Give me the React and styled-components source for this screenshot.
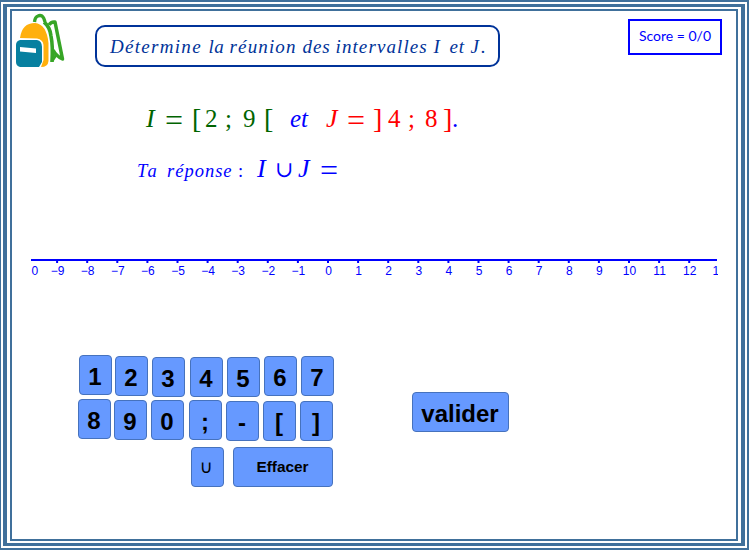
import React from "react";
import styled, { createGlobalStyle } from "styled-components";

const GlobalStyle = createGlobalStyle`
  * { box-sizing: border-box; }
  body { margin: 0; background: #fff; overflow: hidden; }
`;

const OuterFrame = styled.div`
  width: 749px;
  height: 550px;
  border: solid #40709b;
  border-width: 2px 2px 2px 1px;
  padding: 2px;
  background: #fff;
`;

const MiddleFrame = styled.div`
  height: 100%;
  border: solid #40709b;
  border-width: 3px 4px 3px 4px;
  padding: 2px 3px 2px 3px;
`;

const InnerFrame = styled.main`
  height: 100%;
  border: 2px solid #40709b;
  display: flex;
  flex-direction: column;
`;

const Header = styled.header`
  display: flex;
  align-items: flex-start;
  height: 62px;
`;

const Backpack = styled.svg`
  display: block;
  width: 50px;
  height: 58px;
  margin: 2px 0 0 3px;
  flex: none;
`;

const Title = styled.h1`
  margin: 14px 0 0 30px;
  width: 405px;
  height: 42px;
  border: 2px solid #003399;
  border-radius: 10px;
  padding: 0 0 0 13px;
  display: flex;
  align-items: baseline;
  line-height: 40px;
  font-weight: 400;
  flex: none;
`;

const Score = styled.div`
  margin: 8px 0 0 128px;
  width: 94px;
  height: 36px;
  border: 2px solid #0000ff;
  color: #0000ff;
  font: 14px/30px Lato, "Liberation Sans", sans-serif;
  text-align: center;
  white-space: pre;
  flex: none;
`;

const MathLine = styled.div`
  display: flex;
  align-items: baseline;
  height: 40px;
  line-height: 40px;
  margin: ${(p) => p.$margin};
`;

const Token = styled.span`
  flex: none;
  width: ${(p) => p.$slot}px;
  white-space: nowrap;
  color: ${(p) => p.$color};
  font-family: ${(p) => p.$family || '"Liberation Serif"'}, serif;
  font-size: ${(p) => p.$size}px;
  font-style: ${(p) => (p.$italic ? "italic" : "normal")};
  letter-spacing: ${(p) => p.$spacing || 0}px;
  transform: translateY(${(p) => p.$drop}px);
`;

const NumberLine = styled.svg`
  display: block;
  width: 687px;
  height: 30px;
  margin: 65px 0 0 19px;
  font: 12px "Liberation Sans", Arial, sans-serif;
  fill: #0000ff;
`;

const Controls = styled.section`
  display: flex;
  align-items: flex-start;
  margin: 74px 0 0 66px;
`;

const Keypad = styled.div`
  width: 256px;
  flex: none;
`;

const KeyRow = styled.div`
  display: flex;
  align-items: flex-start;
  height: ${(p) => p.$height}px;
`;

const Key = styled.button`
  flex: none;
  width: ${(p) => p.$width || 33}px;
  height: 40px;
  margin: ${(p) => p.$drop || 0}px 0 0 ${(p) => p.$gap || 0}px;
  padding: ${(p) => (p.$small ? 0 : 3)}px 1px 0 0;
  border: 1px solid #4672bd;
  border-radius: 4px;
  background: #6699ff;
  color: #000;
  font: bold ${(p) => p.$small || 24}px/1 "Liberation Sans", Arial, sans-serif;
  text-align: center;
`;

const SymbolKey = styled(Key)`
  padding-right: 3px;
  font-family: "DejaVu Sans", sans-serif;
  font-weight: 400;
`;

const titleWords = [
  ["Détermine", 98.5, 1.3],
  ["la", 21, 0.4],
  ["réunion", 73, 1.15],
  ["des", 33, 0.9],
  ["intervalles", 98, 1.1],
  ["I", 16, 0],
  ["et", 21, 0.8],
  ["J.", 18, 2],
];

const GREEN = "#006400";
const BLUE = "#0000ff";
const RED = "#ff0000";

const intervals = [
  ["I", 19, GREEN, 26, true],
  ["=", 27, GREEN, 32],
  ["[", 13, GREEN, 28],
  ["2", 20, GREEN, 25],
  [";", 18, GREEN, 25],
  ["9", 21, GREEN, 25],
  ["[", 26, GREEN, 28],
  ["et", 36, BLUE, 25, true],
  ["J", 21, RED, 26, true],
  ["=", 26, RED, 32],
  ["]", 15, RED, 28],
  ["4", 20, RED, 25],
  [";", 17, RED, 25],
  ["8", 18, RED, 25],
  ["]", 9, RED, 28],
  [".", 6, BLUE, 25],
];

const DROPS = { "=": 3.5, "[": 1, "]": 1 };

const keyRows = [
  {
    height: 44,
    keys: [["1", 1, 0], ["2", 3, 1], ["3", 4, 2], ["4", 5, 2], ["5", 4, 2], ["6", 4, 1], ["7", 4, 1]],
  },
  {
    height: 48,
    keys: [["8", 0, 0], ["9", 3, 1], ["0", 4, 1], [";", 5, 1], ["-", 4, 2], ["[", 4, 2], ["]", 4, 2]],
  },
];

const ticks = Array.from({ length: 22 }, (_, i) => i - 9);

function Formula({ items }) {
  return items.map(([text, slot, color, size, italic, spacing, family], i) => (
    <Token
      key={i}
      $slot={slot}
      $color={color}
      $size={size}
      $italic={italic}
      $spacing={spacing}
      $family={family}
      $drop={DROPS[text] || 0}
    >
      {text}
    </Token>
  ));
}

function BackpackIcon() {
  return (
    <Backpack viewBox="15 13 50 58" aria-hidden="true">
      <path d="M34.5 22 Q35 17 38 16 Q40 15 42 16 Q44 17.5 45 22" fill="none" stroke="#37a526" strokeWidth="3.4" />
      <path d="M44 22 Q50 27 51 36 Q53 46 52 62" fill="none" stroke="#37a526" strokeWidth="3.6" />
      <path d="M49 25 Q51 21.5 55 22 L62.5 59 Q56 56 53 50" fill="none" stroke="#37a526" strokeWidth="3.5" strokeLinejoin="round" />
      <path d="M52 61 L56 55" fill="none" stroke="#37a526" strokeWidth="3" />
      <path d="M20 38 Q22 23 35 23 Q46.5 24 48.5 43 V61 Q48 67 41 67 L43.5 60 V45 Q43 39.5 37 38.5Z" fill="#ffb00d" />
      <path d="M20 40 H37 Q42 41 42 47 V62 L39 67 H20 Q16 66 16 62 V45 Q16 41 20 40Z" fill="#0780a0" />
      <path d="M20 47 L36 48.5 V53 L20 51.5Z" fill="#fff" />
    </Backpack>
  );
}

export default function App() {
  return (
    <>
      <GlobalStyle />
      <OuterFrame>
        <MiddleFrame>
          <InnerFrame>
            <Header>
              <BackpackIcon />
              <Title>
                <Formula items={titleWords.map(([w, slot, ls]) => [w, slot, "#003399", 19, true, ls])} />
              </Title>
              <Score>Score = 0/0</Score>
            </Header>
            <MathLine $margin="23px 0 0 134px">
              <Formula items={intervals} />
            </MathLine>
            <MathLine $margin="10px 0 0 125px">
              <Formula
                items={[
                  ["Ta", 30, BLUE, 18.5, true, 2],
                  ["réponse", 71, BLUE, 18.5, true, 1],
                  [":", 19, BLUE, 18.5],
                  ["I", 18, BLUE, 26, true],
                  ["∪", 23, BLUE, 22, false, 0, '"DejaVu Serif"'],
                  ["J", 22, BLUE, 26, true],
                  ["=", 20, BLUE, 32],
                ]}
              />
            </MathLine>
            <NumberLine viewBox="31 251 687 30">
              <path d="M31 260H717" stroke="#0000ff" strokeWidth="2" />
              {ticks.map((n) => (
                <path key={n} d={`M${328 + n * 30.1} 260v3`} stroke="#0000ff" strokeWidth="2" />
              ))}
              <text x="31.5" y="275">0</text>
              {ticks.map((n) => (
                <text key={n} x={328.5 + n * 30.1} y="275" textAnchor="middle">
                  {n < 0 ? `−${-n}` : n}
                </text>
              ))}
              <text x="712.5" y="275">1</text>
            </NumberLine>
            <Controls>
              <Keypad>
                {keyRows.map((row) => (
                  <KeyRow key={row.height} $height={row.height}>
                    {row.keys.map(([label, gap, drop]) => (
                      <Key key={label} $gap={gap} $drop={drop}>{label}</Key>
                    ))}
                  </KeyRow>
                ))}
                <KeyRow $height={40}>
                  <SymbolKey $gap={113} $small={18}>∪</SymbolKey>
                  <Key $gap={9} $width={100} $small={15.4}>Effacer</Key>
                </KeyRow>
              </Keypad>
              <Key $gap={78} $drop={37} $width={97}>valider</Key>
            </Controls>
          </InnerFrame>
        </MiddleFrame>
      </OuterFrame>
    </>
  );
}
